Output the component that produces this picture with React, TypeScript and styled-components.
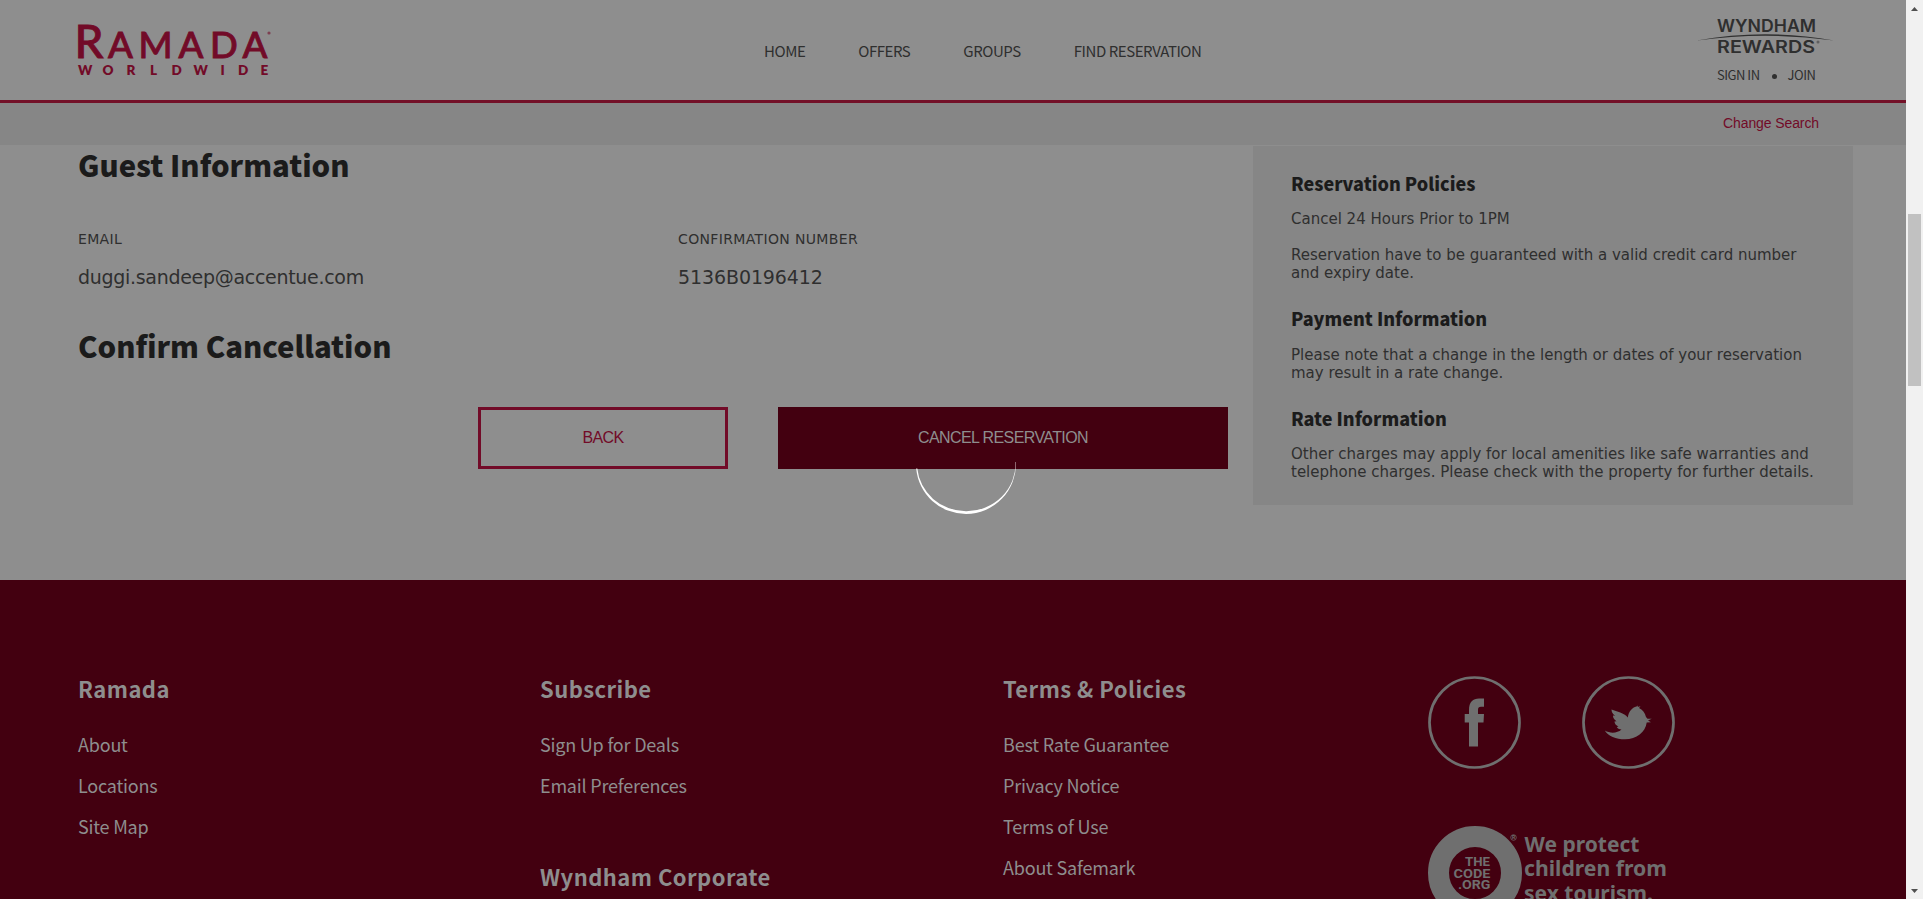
import React from "react";
import styled, { createGlobalStyle } from "styled-components";

const c = {
  page: "#8e8e8e",
  band: "#868686",
  brand: "#720b28",
  rule: "#731128",
  wine: "#430010",
  heading: "#1b1b1b",
  text: "#2f2f2f",
  onWine: "#8e8e8e",
  badge: "#6f6f6f",
};
const display = '"Noto Sans CJK SC", sans-serif';
const body = '"DejaVu Sans", sans-serif';
const ui = '"Liberation Sans", Arial, sans-serif';

const GlobalStyle = createGlobalStyle`
  * { box-sizing: border-box; }
  body { margin: 0; overflow: hidden; background: ${c.page}; color: ${c.text}; }
  h2, h3, h4, p, ul { margin: 0; padding: 0; }
  ul { list-style: none; }
  a { color: inherit; text-decoration: none; }
`;

const Window = styled.div`
  display: flex;
  height: 899px;
  overflow: hidden;
`;

const Page = styled.div`
  position: relative;
  flex: 1;
  display: flex;
  flex-direction: column;
  overflow: hidden;
`;

const Header = styled.header`
  display: grid;
  grid-template-columns: 686px 1fr 283px;
  flex: none;
  height: 103px;
  padding-left: 78px;
  border-bottom: 3px solid ${c.rule};
`;

const BrandLogo = styled.svg`
  display: block;
  overflow: visible;
  width: 200px;
  height: 60px;
  margin-top: 20px;
  fill: ${c.brand};
`;

const Nav = styled.nav`
  display: flex;
  gap: 53px;
  padding-top: 36px;
  font: 400 15px/30px ${display};
  letter-spacing: -0.45px;
`;

const Rewards = styled.div`
  display: flex;
  flex-direction: column;
  padding-left: 94px;
`;

const RewardsLogo = styled.svg`
  display: block;
  width: 140px;
  height: 46px;
  margin: 14px 0 0 -20px;
  fill: ${c.text};
`;

const RewardsLinks = styled.div`
  display: flex;
  align-items: center;
  margin-top: 4px;
  font: 400 13px/22px ${display};
  letter-spacing: -0.5px;
`;

const Dot = styled.i`
  width: 5px;
  height: 5px;
  margin: 3px 11px 0 12px;
  border-radius: 50%;
  background: ${c.text};
`;

const SearchBar = styled.div`
  display: flex;
  justify-content: flex-end;
  flex: none;
  height: 42px;
  padding: 11px 87px 0 0;
  background: ${c.band};
  color: ${c.brand};
  font: 14px/18px ${ui};
  letter-spacing: -0.1px;
`;

const Main = styled.main`
  display: grid;
  grid-template-columns: 1150px 600px;
  column-gap: 25px;
  flex: none;
  height: 435px;
  padding: 1px 0 0 78px;
`;

const SectionTitle = styled.h2`
  color: ${c.heading};
  font: 900 29.3px/36px ${display};
`;

const Details = styled.dl`
  display: grid;
  grid-template-columns: 600px 1fr;
  margin: 48px 0 38px;
`;

const Label = styled.dt`
  font: 14px/18px ${body};
  letter-spacing: 0.35px;
`;

const Value = styled.dd<{ $tight?: boolean }>`
  margin: 17px 0 0;
  font: 19px/24px ${body};
  letter-spacing: ${(p) => (p.$tight ? "-0.3px" : "-0.1px")};
`;

const Actions = styled.div`
  display: flex;
  justify-content: flex-end;
  gap: 50px;
  margin-top: 44px;
`;

const Button = styled.button<{ $primary?: boolean }>`
  width: ${(p) => (p.$primary ? 450 : 250)}px;
  height: 62px;
  padding: 0;
  border: 3px solid ${(p) => (p.$primary ? c.wine : c.brand)};
  border-radius: 0;
  background: ${(p) => (p.$primary ? c.wine : "transparent")};
  color: ${(p) => (p.$primary ? c.onWine : c.brand)};
  font: 16px/18px ${ui};
  letter-spacing: -0.6px;
`;

const Policies = styled.aside`
  height: 359px;
  padding: 25px 38px 24px;
  background: ${c.band};
`;

const PolicyTitle = styled.h4`
  color: ${c.heading};
  font: 900 18px/24px ${display};
`;

const PolicyText = styled.p<{ $top: number; $bottom?: number }>`
  margin: ${(p) => p.$top}px 0 ${(p) => p.$bottom || 0}px;
  font: 15px/18px ${body};
  white-space: nowrap;
`;

const Footer = styled.footer`
  display: grid;
  grid-template-columns: 462px 463px 425px 1fr;
  flex: 1;
  min-height: 0;
  padding: 94px 0 0 78px;
  background: ${c.wine};
  color: ${c.onWine};
`;

const FooterTitle = styled.h3`
  font: 700 22px/28px ${display};
  letter-spacing: 0.45px;
`;

const FooterLinks = styled.ul`
  margin-top: 22px;
  font: 400 18px/41px ${display};
  letter-spacing: -0.2px;
`;

const FooterGroup = styled.section`
  & + & { margin-top: 56px; }
`;

const Badges = styled.div`
  display: flex;
  flex-direction: column;
  gap: 57px;
  padding-top: 2px;
`;

const Social = styled.div`
  display: flex;
  gap: 61px;
`;

const SocialIcon = styled.svg`
  display: block;
  width: 93px;
  height: 93px;
  fill: ${c.badge};
`;

const CodeBadge = styled.svg`
  display: block;
  width: 260px;
  height: 94px;
  flex: none;
  fill: ${c.badge};
`;

const Spinner = styled.svg`
  position: absolute;
  left: 916px;
  top: 414px;
  width: 100px;
  height: 100px;
  fill: #fff;
`;

const Scrollbar = styled.div`
  display: flex;
  flex-direction: column;
  align-items: center;
  width: 17px;
  padding: 7px 0 6px;
  background: #f1f1f1;
`;

const Arrow = styled.svg`
  width: 7px;
  height: 4px;
  fill: #505050;
`;

const Thumb = styled.div`
  width: 13px;
  height: 172px;
  margin: 203px 0 auto;
  background: #c1c1c1;
`;

const navItems = ["HOME", "OFFERS", "GROUPS", "FIND RESERVATION"];

function Links({ title, items = [] }: { title: string; items?: string[] }) {
  return (
    <FooterGroup>
      <FooterTitle>{title}</FooterTitle>
      {items.length > 0 && (
        <FooterLinks>
          {items.map((item) => (
            <li key={item}><a href="#">{item}</a></li>
          ))}
        </FooterLinks>
      )}
    </FooterGroup>
  );
}

export default function App() {
  return (
    <Window>
      <GlobalStyle />
      <Page>
        <Header>
          <BrandLogo viewBox="0 0 200 60" fontFamily="Lato, sans-serif">
            <text x="-3.5" y="38" fontSize="47" fontWeight="500" textLength="29" lengthAdjust="spacingAndGlyphs" stroke={c.brand} strokeWidth="0.9">R</text>
            <text x="30 60.5 100.5 132 164.5" y="38" fontSize="36.5" fontWeight="500" stroke={c.brand} strokeWidth="0.9">AMADA</text>
            <text x="0 24.5 48.5 72 93.5 115.500 142.500 160 182.5" y="54.5" fontSize="13.5" fontWeight="800">WORLDWIDE</text>
            <circle cx="191" cy="13" r="1.6" opacity="0.6" />
          </BrandLogo>
          <Nav>
            {navItems.map((item) => <a key={item} href="#">{item}</a>)}
          </Nav>
          <Rewards>
            <RewardsLogo viewBox="0 0 140 46" fontFamily="Inter, sans-serif" fontSize="17" fontWeight="600">
              <text x="20" y="17.5" textLength="99" lengthAdjust="spacingAndGlyphs">WYNDHAM</text>
              <text x="20" y="38.7" textLength="98" lengthAdjust="spacingAndGlyphs">REWARDS</text>
              <path d="M0 26.6Q68 14 137 26.6Q68 17 0 26.6Z" />
              <circle cx="121" cy="28" r="1.5" opacity="0.5" />
            </RewardsLogo>
            <RewardsLinks>
              <a href="#">SIGN IN</a><Dot /><a href="#">JOIN</a>
            </RewardsLinks>
          </Rewards>
        </Header>
        <SearchBar><a href="#">Change Search</a></SearchBar>
        <Main>
          <div>
            <SectionTitle>Guest Information</SectionTitle>
            <Details>
              <div>
                <Label>EMAIL</Label>
                <Value $tight>duggi.sandeep@accentue.com</Value>
              </div>
              <div>
                <Label>CONFIRMATION NUMBER</Label>
                <Value>5136B0196412</Value>
              </div>
            </Details>
            <SectionTitle>Confirm Cancellation</SectionTitle>
            <Actions>
              <Button>BACK</Button>
              <Button $primary>CANCEL RESERVATION</Button>
            </Actions>
          </div>
          <Policies>
            <PolicyTitle>Reservation Policies</PolicyTitle>
            <PolicyText $top={15}>Cancel 24 Hours Prior to 1PM</PolicyText>
            <PolicyText $top={18} $bottom={24}>
              Reservation have to be guaranteed with a valid credit card number<br />and expiry date.
            </PolicyText>
            <PolicyTitle>Payment Information</PolicyTitle>
            <PolicyText $top={16} $bottom={24}>
              Please note that a change in the length or dates of your reservation<br />may result in a rate change.
            </PolicyText>
            <PolicyTitle>Rate Information</PolicyTitle>
            <PolicyText $top={15}>
              Other charges may apply for local amenities like safe warranties and<br />telephone charges. Please check with the property for further details.
            </PolicyText>
          </Policies>
        </Main>
        <Footer>
          <Links title="Ramada" items={["About", "Locations", "Site Map"]} />
          <div>
            <Links title="Subscribe" items={["Sign Up for Deals", "Email Preferences"]} />
            <Links title="Wyndham Corporate" />
          </div>
          <Links title="Terms & Policies" items={["Best Rate Guarantee", "Privacy Notice", "Terms of Use", "About Safemark"]} />
          <Badges>
            <Social>
              <SocialIcon viewBox="0 0 93 93">
                <circle cx="46.5" cy="46.5" r="45" fill="none" stroke={c.badge} strokeWidth="2.7" />
                <path d="M41 70.5V46.5H36.7V38H41V34C41 26 45 22.5 51 22.5H56V30.8H53C50.8 30.8 50 31.8 50 34V38H56L55.5 46.5H50V70.5Z" />
              </SocialIcon>
              <SocialIcon viewBox="0 0 93 93">
                <circle cx="46.5" cy="46.5" r="45" fill="none" stroke={c.badge} strokeWidth="2.7" />
                <path d="M29.5 33.5C35 36 42 36.5 45.8 41.5C46.5 36 50 31.5 54.5 30.500L56 29.500L55.600 31L58.500 30.200L57 32C60.500 33.500 63 37 64 41L65.500 42.800L69.800 42.700L66 44.500L69 46.300L64.700 46.500C63.500 56 54.500 63.300 43 63.300C34 63.300 26 60 22.800 54.500C28 57.500 35 57.500 39.500 53.500C37 53.500 35.500 52.500 34.800 51L36.500 50.500C34 49.500 32.500 47.500 32.500 45.500L34.500 45.200C31.800 43 30.800 41.500 31 39.500L33 39.700C30.500 37.500 29.500 36 29.500 33.500Z" />
              </SocialIcon>
            </Social>
            <CodeBadge viewBox="0 0 260 94">
              <circle cx="47" cy="47" r="36.5" fill="none" stroke={c.badge} strokeWidth="21" />
              <g fontFamily="Roboto, sans-serif" fontWeight="700" fontSize="13.5">
                <text x="37" y="39.5" textLength="25" lengthAdjust="spacingAndGlyphs">THE</text>
                <text x="25.5" y="51.5" textLength="37" lengthAdjust="spacingAndGlyphs">CODE</text>
                <text x="30" y="63.3" textLength="32.500" lengthAdjust="spacingAndGlyphs">.ORG</text>
              </g>
              <circle cx="85.5" cy="11.5" r="2.8" fill="none" stroke={c.badge} strokeWidth="0.7" />
              <text x="83.9" y="13.3" fontFamily="Roboto, sans-serif" fontWeight="700" fontSize="5">R</text>
              <g fontFamily="Noto Sans, Open Sans, sans-serif" fontWeight="700" fontSize="21.5">
                <text x="96.500" y="25.5" textLength="115" lengthAdjust="spacingAndGlyphs">We protect</text>
                <text x="96" y="50" textLength="143" lengthAdjust="spacingAndGlyphs">children from</text>
                <text x="96" y="74.5" textLength="129" lengthAdjust="spacingAndGlyphs">sex tourism.</text>
              </g>
            </CodeBadge>
          </Badges>
        </Footer>
        <Spinner viewBox="0 0 100 100">
          <path d="M99.900 48A50 50 0 0 1 50 100A50 50 0 0 1 0.200 54.500L1.300 54.500A49 47.200 0 0 0 50 97.200A49 47.200 0 0 0 99.500 48Z" />
        </Spinner>
      </Page>
      <Scrollbar>
        <Arrow viewBox="0 0 7 4"><path d="M0 4L3.5 0L7 4Z" /></Arrow>
        <Thumb />
        <Arrow viewBox="0 0 7 4"><path d="M0 0L3.5 4L7 0Z" /></Arrow>
      </Scrollbar>
    </Window>
  );
}
